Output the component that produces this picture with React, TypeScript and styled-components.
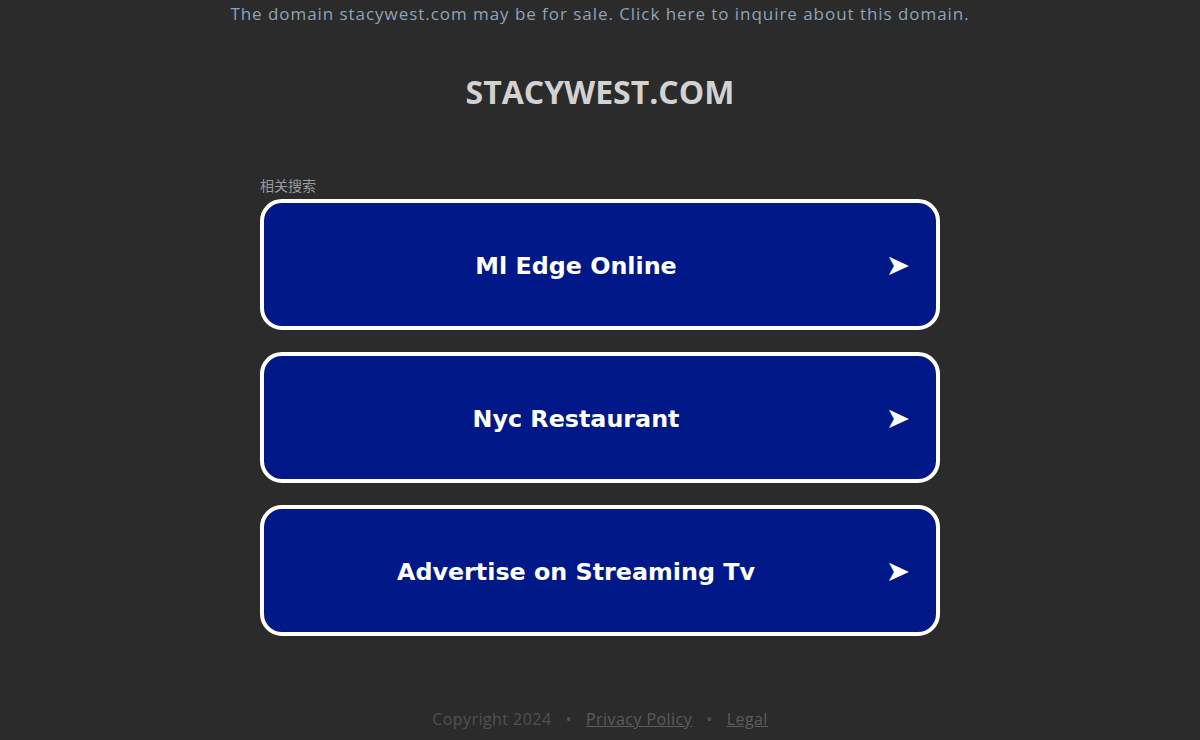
import React from "react";
import styled, { createGlobalStyle } from "styled-components";

const links = ["Ml Edge Online", "Nyc Restaurant", "Advertise on Streaming Tv"];

const GlobalStyle = createGlobalStyle`
  html, body {
    margin: 0;
    padding: 0;
    background: #2b2b2b;
  }
  body {
    font-family: "Open Sans", "DejaVu Sans", sans-serif;
  }
`;

export default function App() {
  return (
    <Page>
      <GlobalStyle />
      <SaleBanner>
        The domain stacywest.com may be for sale. Click here to inquire about this domain.
      </SaleBanner>
      <Title>STACYWEST.COM</Title>
      <Results>
        <Label>相关搜索</Label>
        {links.map((text) => (
          <LinkButton key={text}>
            <span className="text">{text}</span>
            <span className="arrow">➤</span>
          </LinkButton>
        ))}
      </Results>
      <Footer>
        <span>Copyright 2024</span>
        <Dot>•</Dot>
        <a>Privacy Policy</a>
        <Dot>•</Dot>
        <a>Legal</a>
      </Footer>
    </Page>
  );
}

const Page = styled.div`
  width: 1200px;
  height: 740px;
  display: flex;
  flex-direction: column;
  align-items: center;
  background: #2b2b2b;
  overflow: hidden;
`;

const SaleBanner = styled.div`
  margin-top: 2px;
  height: 24px;
  line-height: 24px;
  font-size: 17px;
  color: #8fa3b8;
  letter-spacing: 0.95px;
`;

const Title = styled.h1`
  margin: 48px 0 0;
  height: 36px;
  line-height: 36px;
  font-size: 32px;
  font-weight: 700;
  color: #d2d2d2;
`;

const Results = styled.div`
  margin-top: 66px;
  width: 680px;
  display: flex;
  flex-direction: column;
  gap: 25px;
`;

const Label = styled.div`
  font-family: "Noto Sans CJK SC", sans-serif;
  font-size: 14px;
  line-height: 18px;
  color: #9a9a9a;
  margin-bottom: -22px;
  height: 20px;
`;

const LinkButton = styled.div`
  height: 120px;
  box-sizing: content-box;
  border: 4px solid #ffffff;
  border-radius: 22px;
  background: #011889;
  display: flex;
  align-items: center;
  padding: 3px 28px 0 0;
  margin-bottom: -3px;
  color: #ffffff;
  font-family: "DejaVu Sans", Verdana, sans-serif;
  font-weight: 700;

  .text {
    flex: 1;
    text-align: center;
    font-size: 23.8px;
  }

  .arrow {
    font-size: 29px;
    width: 20px;
    display: flex;
    justify-content: center;
    margin-top: -3px;
  }
`;

const Footer = styled.div`
  margin-top: auto;
  margin-bottom: 10px;
  display: flex;
  gap: 14px;
  font-size: 16px;
  color: #515151;
  letter-spacing: 0.45px;

  a {
    color: #5c5c5c;
    text-decoration: underline;
  }
`;

const Dot = styled.span`
  color: #515151;
`;
